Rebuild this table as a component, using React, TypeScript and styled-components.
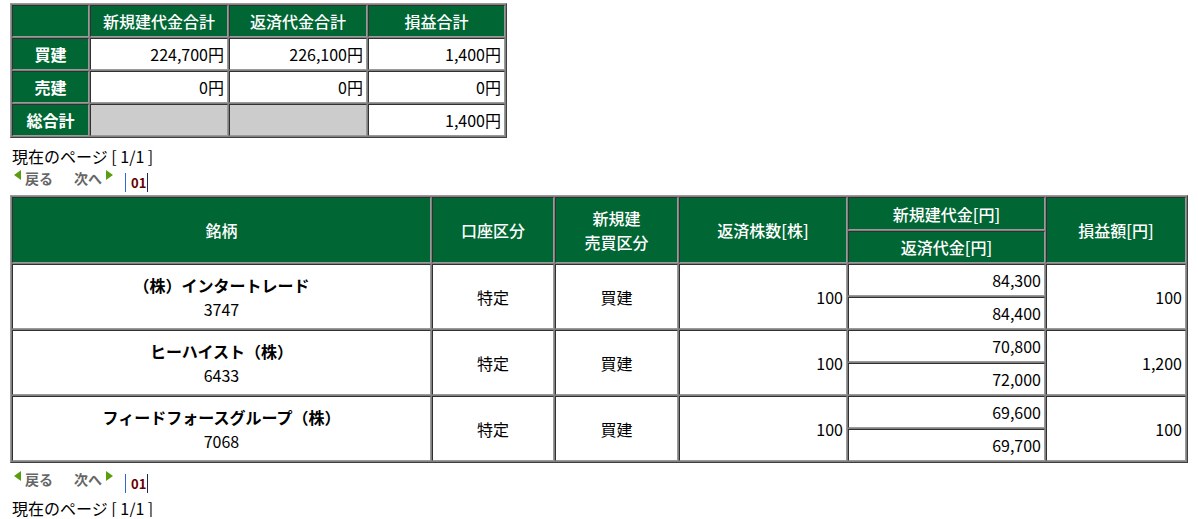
import React from "react";
import styled, { createGlobalStyle } from "styled-components";

const GlobalStyle = createGlobalStyle`
  html, body { margin: 0; padding: 0; background: #fff; }
  body {
    font-family: "Noto Sans CJK JP", "Noto Sans", sans-serif;
    font-size: 16px;
    color: #000;
  }
`;

const Page = styled.div`
  padding: 3px 0 0 10px;
  width: 1178px;
`;

const Grid = styled.table<{ $width: number }>`
  width: ${(p) => p.$width}px;
  table-layout: fixed;
  border-collapse: separate;
  border-spacing: 1px;
  background: #808080;
  border: 1px solid;
  border-color: #9a9a9a #404040 #404040 #9a9a9a;
  font-size: 16px;
`;

const Head = styled.th<{ $h?: number; $bold?: boolean }>`
  background: #006633;
  color: #fff;
  font-weight: ${(p) => (p.$bold ? 700 : 500)};
  text-align: center;
  vertical-align: middle;
  height: ${(p) => p.$h ?? 32}px;
  padding: 0 2px;
  line-height: 24px;
  border: 1px solid;
  border-color: #303030 #9a9a9a #9a9a9a #303030;
  box-sizing: border-box;
  white-space: nowrap;
`;

const Cell = styled.td<{ $align?: "left" | "center" | "right"; $gray?: boolean; $h?: number }>`
  background: ${(p) => (p.$gray ? "#cccccc" : "#ffffff")};
  text-align: ${(p) => p.$align ?? "right"};
  vertical-align: middle;
  height: ${(p) => p.$h ?? 32}px;
  padding: 0 3px;
  line-height: 24px;
  border: 1px solid;
  border-color: #303030 #9a9a9a #9a9a9a #303030;
  box-sizing: border-box;
  white-space: nowrap;
`;

const Name = styled.div`
  font-weight: 700;
`;

const PageInfo = styled.div<{ $top: number }>`
  margin-top: ${(p) => p.$top}px;
  padding-left: 2px;
  height: 18px;
  line-height: 18px;
  font-size: 16px;
`;

const Pager = styled.div<{ $top: number; $bottom?: number }>`
  display: flex;
  align-items: flex-start;
  height: 22px;
  margin-top: ${(p) => p.$top}px;
  margin-bottom: ${(p) => p.$bottom ?? 0}px;
  padding-left: 4px;
`;

const PagerLink = styled.span<{ $gap?: number }>`
  display: inline-flex;
  align-items: flex-start;
  margin-right: ${(p) => p.$gap ?? 0}px;
  color: #666;
  font-weight: 700;
  font-size: 14px;
  line-height: 16px;
`;

const Tri = styled.span<{ $dir: "left" | "right" }>`
  display: inline-block;
  width: 0;
  height: 0;
  border-top: 5px solid transparent;
  border-bottom: 5px solid transparent;
  ${(p) =>
    p.$dir === "left"
      ? "border-right: 7px solid #5a9e0f; margin-right: 4px;"
      : "border-left: 7px solid #5a9e0f; margin-left: 4px;"}
`;

const PageNums = styled.span`
  display: inline-block;
  height: 19px;
  line-height: 19px;
  margin-top: 3px;
  margin-left: 12px;
  padding: 0 1px 0 5px;
  border-left: 1px solid #3366cc;
  border-right: 1px solid #1a2a55;
  color: #660000;
  font-weight: 700;
  font-size: 13px;
`;

const PagerBar = () => (
  <>
    <PagerLink $gap={21}>
      <Tri $dir="left" />
      戻る
    </PagerLink>
    <PagerLink>
      次へ
      <Tri $dir="right" />
    </PagerLink>
    <PageNums>01</PageNums>
  </>
);

const summary = [
  { label: "買建", a: "224,700円", b: "226,100円", c: "1,400円" },
  { label: "売建", a: "0円", b: "0円", c: "0円" },
];

const rows = [
  { name: "（株）インタートレード", code: "3747", open: "84,300", close: "84,400", pl: "100" },
  { name: "ヒーハイスト（株）", code: "6433", open: "70,800", close: "72,000", pl: "1,200" },
  { name: "フィードフォースグループ（株）", code: "7068", open: "69,600", close: "69,700", pl: "100" },
];

export default function App() {
  return (
    <>
      <GlobalStyle />
      <Page>
        <Grid $width={497}>
          <colgroup>
            <col style={{ width: 77 }} />
            <col style={{ width: 138 }} />
            <col style={{ width: 138 }} />
            <col style={{ width: 137 }} />
          </colgroup>
          <tbody>
            <tr>
              <Head $h={32} />
              <Head $h={32}>新規建代金合計</Head>
              <Head $h={32}>返済代金合計</Head>
              <Head $h={32}>損益合計</Head>
            </tr>
            {summary.map((s) => (
              <tr key={s.label}>
                <Head $bold>{s.label}</Head>
                <Cell>{s.a}</Cell>
                <Cell>{s.b}</Cell>
                <Cell>{s.c}</Cell>
              </tr>
            ))}
            <tr>
              <Head $bold>総合計</Head>
              <Cell $gray />
              <Cell $gray />
              <Cell>1,400円</Cell>
            </tr>
          </tbody>
        </Grid>

        <PageInfo $top={9}>現在のページ [ 1/1 ]</PageInfo>
        <Pager $top={5} $bottom={3}>
          <PagerBar />
        </Pager>

        <Grid $width={1178}>
          <colgroup>
            <col style={{ width: 419 }} />
            <col style={{ width: 122 }} />
            <col style={{ width: 123 }} />
            <col style={{ width: 168 }} />
            <col style={{ width: 197 }} />
            <col style={{ width: 140 }} />
          </colgroup>
          <tbody>
            <tr>
              <Head rowSpan={2}>銘柄</Head>
              <Head rowSpan={2}>口座区分</Head>
              <Head rowSpan={2}>
                新規建
                <br />
                売買区分
              </Head>
              <Head rowSpan={2}>返済株数[株]</Head>
              <Head $h={33}>新規建代金[円]</Head>
              <Head rowSpan={2}>損益額[円]</Head>
            </tr>
            <tr>
              <Head $h={32}>返済代金[円]</Head>
            </tr>
            {rows.map((r) => (
              <React.Fragment key={r.code}>
                <tr>
                  <Cell rowSpan={2} $align="center">
                    <Name>{r.name}</Name>
                    <div>{r.code}</div>
                  </Cell>
                  <Cell rowSpan={2} $align="center">特定</Cell>
                  <Cell rowSpan={2} $align="center">買建</Cell>
                  <Cell rowSpan={2}>100</Cell>
                  <Cell>{r.open}</Cell>
                  <Cell rowSpan={2}>{r.pl}</Cell>
                </tr>
                <tr>
                  <Cell>{r.close}</Cell>
                </tr>
              </React.Fragment>
            ))}
          </tbody>
        </Grid>

        <Pager $top={8}>
          <PagerBar />
        </Pager>
        <PageInfo $top={6}>現在のページ [ 1/1 ]</PageInfo>
      </Page>
    </>
  );
}
